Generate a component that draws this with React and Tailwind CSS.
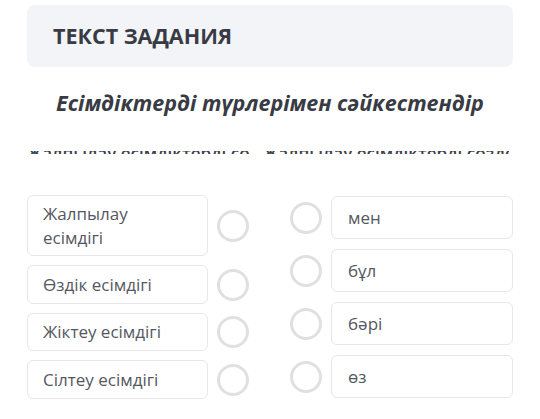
import React from 'react'

const font = { fontFamily: '"Open Sans", "Noto Sans", sans-serif' }

const leftItems = [
  { text: ['Жалпылау', 'есімдігі'], h: 'h-[61px]' },
  { text: ['Өздік есімдігі'], h: 'h-[39px]' },
  { text: ['Жіктеу есімдігі'], h: 'h-[38px]' },
  { text: ['Сілтеу есімдігі'], h: 'h-[39px]' },
]

const rightItems = ['мен', 'бұл', 'бәрі', 'өз']

function Circle() {
  return <div className="w-[32px] h-[32px] shrink-0 rounded-full border-[3px] border-[#e0e0e0] bg-white" />
}

export default function App() {
  return (
    <div className="w-[540px] h-[419px] bg-white overflow-hidden px-[27px] pt-[5px]" style={font}>
      {/* Header */}
      <div className="h-[62px] rounded-lg bg-[#f3f4f7] flex items-center px-[26px]">
        <h1 className="text-[21.5px] font-bold text-[#383b44]">ТЕКСТ ЗАДАНИЯ</h1>
      </div>

      {/* Title */}
      <p className="mt-[21px] text-center text-[21.5px] font-bold italic text-[#383b44] leading-[30px]">
        Есімдіктерді түрлерімен сәйкестендір
      </p>

      {/* clipped strip of text */}
      <div className="mt-[33px] h-[3px] overflow-clip [clip-path:inset(0)]">
        <div className="flex gap-[14px] text-[17px] leading-[3px] text-[#3d4048] font-semibold whitespace-nowrap">
          <div className="w-[222px] overflow-hidden">Жалпылау есімдіктерді сөздермен сәйкестендір бәрі</div>
          <div className="w-[246px] overflow-hidden">Жалпылау есімдіктерді сөздермен сәйкестендір бәрі</div>
        </div>
      </div>

      {/* Matching columns */}
      <div className="mt-[41px] flex justify-between">
        <div className="flex flex-col gap-[9px]">
          {leftItems.map((item) => (
            <div key={item.text[0]} className="flex items-center gap-[9px]">
              <div className={`w-[181px] ${item.h} rounded-md border border-[#e6e7ea] bg-white flex flex-col justify-center px-[15px] text-[17px] leading-[24px] text-[#555861]`}>
                {item.text.map((line) => (
                  <span key={line}>{line}</span>
                ))}
              </div>
              <Circle />
            </div>
          ))}
        </div>
        <div className="flex flex-col gap-[10px] pt-[1px]">
          {rightItems.map((t) => (
            <div key={t} className="flex items-center gap-[9px]">
              <Circle />
              <div className="w-[182px] h-[43px] rounded-md border border-[#e6e7ea] bg-white flex items-center px-[16px] text-[17px] leading-[24px] text-[#555861]">
                {t}
              </div>
            </div>
          ))}
        </div>
      </div>
    </div>
  )
}
